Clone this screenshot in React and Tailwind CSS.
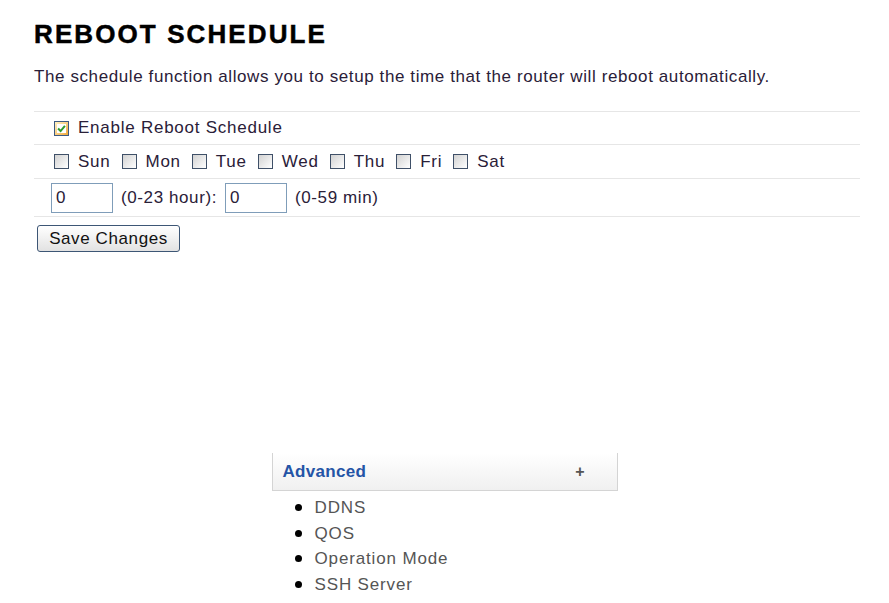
import React, { useState } from "react";

const Box = ({ checked, onClick }) => (
  <span
    onClick={onClick}
    className={`inline-flex items-center justify-center w-[15px] h-[15px] border cursor-pointer shrink-0 ${
      checked
        ? "border-[#3c5a82] bg-gradient-to-br from-[#fff3c4] to-[#f0a830] p-[2px]"
        : "border-[#3f5068] bg-gradient-to-br from-[#d2d2d2] to-[#ffffff]"
    }`}
  >
    {checked && (
      <span className="w-full h-full bg-white flex items-center justify-center">
        <svg viewBox="0 0 10 10" className="w-[9px] h-[9px]">
          <path d="M1.2 5 L4 7.8 L8.8 2" fill="none" stroke="#2e9a2e" strokeWidth="2.2" />
        </svg>
      </span>
    )}
  </span>
);

const Row = ({ className, children }) => (
  <div className={`flex items-center border-t border-[#e6e6e6] ${className}`}>{children}</div>
);

export default function App() {
  const [enabled, setEnabled] = useState(true);
  const [days, setDays] = useState({});
  const dayList = ["Sun", "Mon", "Tue", "Wed", "Thu", "Fri", "Sat"];
  const links = ["DDNS", "QOS", "Operation Mode", "SSH Server"];

  return (
    <div className="w-[889px] h-[603px] bg-white overflow-hidden font-['Liberation_Sans',Arial,sans-serif] text-[#222]">
      <div className="pl-[34px] pr-[29px]">
        {/* Title */}
        <h1 className="pt-[20px] text-[26px] leading-[28px] font-bold tracking-[2.1px] text-black [-webkit-text-stroke:0.5px_black]">
          REBOOT SCHEDULE
        </h1>
        <p className="mt-[19px] text-[17px] leading-[20px] tracking-[0.6px] text-[#2a2038]">
          The schedule function allows you to setup the time that the router will reboot automatically.
        </p>

        {/* Form rows */}
        <div className="mt-[24px] text-[17px] tracking-[0.75px] text-[#2a2038]">
          <Row className="h-[33px] pl-[20px]">
            <Box checked={enabled} onClick={() => setEnabled(!enabled)} />
            <span className="ml-[9px]">Enable Reboot Schedule</span>
          </Row>
          <Row className="h-[34px] pl-[20px]">
            {dayList.map((d) => (
              <span key={d} className="flex items-center mr-[11px]">
                <Box
                  checked={!!days[d]}
                  onClick={() => setDays({ ...days, [d]: !days[d] })}
                />
                <span className="ml-[9px]">{d}</span>
              </span>
            ))}
          </Row>
          <Row className="h-[39px] pl-[17px] border-b tracking-[0.6px]">
            <input
              defaultValue="0"
              className="w-[62px] h-[30px] border border-[#7f9db9] px-[4px] text-[17px] outline-none"
            />
            <span className="ml-[8px] mr-[8px]">(0-23 hour):</span>
            <input
              defaultValue="0"
              className="w-[62px] h-[30px] border border-[#7f9db9] px-[4px] text-[17px] outline-none"
            />
            <span className="ml-[8px]">(0-59 min)</span>
          </Row>
        </div>

        <button className="mt-[8px] ml-[3px] w-[143px] h-[27px] rounded-[3px] border border-[#3d5675] bg-gradient-to-b from-[#ffffff] to-[#e2e2e2] text-[17px] tracking-[0.6px] text-[#111] leading-none">
          Save Changes
        </button>
      </div>

      {/* Sidebar menu */}
      <div className="mt-[201px] w-[346px] mx-auto">
        <div className="h-[38px] flex items-center justify-between pl-[10px] pr-[32px] border-l border-r border-b border-[#d4d4d4] bg-gradient-to-b from-[#ffffff] to-[#f0f0f0]">
          <span className="text-[17px] font-bold tracking-[0.3px] text-[#2454a6]">Advanced</span>
          <span className="text-[16px] font-bold text-[#555]">+</span>
        </div>
        <ul className="mt-[4px] pl-[23px] text-[17px] leading-[25.5px] tracking-[0.85px] text-[#555]">
          {links.map((l) => (
            <li key={l} className="flex items-center">
              <span className="w-[7px] h-[7px] rounded-full bg-black mr-[13px]" />
              {l}
            </li>
          ))}
        </ul>
      </div>
    </div>
  );
}
